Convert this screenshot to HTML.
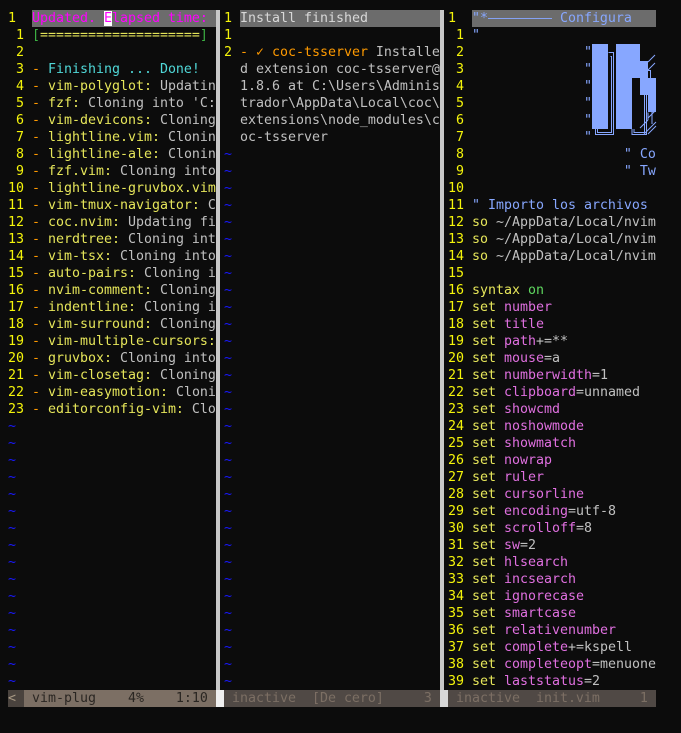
<!DOCTYPE html>
<html><head><meta charset="utf-8"><style>
*{margin:0;padding:0;box-sizing:border-box}
body{width:681px;height:733px;background:#0c0c0c;overflow:hidden;position:relative;font-family:"DejaVu Sans Mono","Liberation Mono",monospace;font-size:13.29px;color:#c0c0c0}
.p{position:absolute;top:10px;overflow:hidden;height:680px}
.r{height:17px;line-height:17px;white-space:pre;position:relative}
.n{color:#f5f50a}
.y{color:#e6e65a}
.o{color:#ff9a00}
.c{color:#50d8d8}
.m{color:#e070e0}
.b{color:#87a7ff}
.g{color:#5fd75f}
.t{color:#1818ff}
.hd{background:#6c6c6c}
.sep{position:absolute;top:10px;height:680px;width:4px;background:#c8c8c8}
.st{position:absolute;top:690px;height:17px;line-height:17px;white-space:pre}
</style></head><body>
<div class="sep" style="left:216px"></div>
<div class="sep" style="left:440px"></div>

<div class="p" style="left:8px;width:208px">
<div class="r"><span class="n">1  </span><span class="hd" style="color:#ff00ff;display:inline-block;width:184px">Updated. <span style="background:#fff">E</span>lapsed time:</span></div>
<div class="r"><span class="n"> 1 </span><span style="color:#3cb043">[</span><span class="y">====================</span><span style="color:#3cb043">]</span></div>
<div class="r"><span class="n"> 2 </span></div>
<div class="r"><span class="n"> 3 </span><span class="o">- </span><span class="c">Finishing ... Done!</span></div>
<div class="r"><span class="n"> 4 </span><span class="o">- </span><span class="y">vim-polyglot:</span> Updating</div>
<div class="r"><span class="n"> 5 </span><span class="o">- </span><span class="y">fzf:</span> Cloning into 'C:</div>
<div class="r"><span class="n"> 6 </span><span class="o">- </span><span class="y">vim-devicons:</span> Cloning</div>
<div class="r"><span class="n"> 7 </span><span class="o">- </span><span class="y">lightline.vim:</span> Cloning</div>
<div class="r"><span class="n"> 8 </span><span class="o">- </span><span class="y">lightline-ale:</span> Cloning</div>
<div class="r"><span class="n"> 9 </span><span class="o">- </span><span class="y">fzf.vim:</span> Cloning into</div>
<div class="r"><span class="n">10 </span><span class="o">- </span><span class="y">lightline-gruvbox.vim:</span></div>
<div class="r"><span class="n">11 </span><span class="o">- </span><span class="y">vim-tmux-navigator:</span> Cl</div>
<div class="r"><span class="n">12 </span><span class="o">- </span><span class="y">coc.nvim:</span> Updating fi</div>
<div class="r"><span class="n">13 </span><span class="o">- </span><span class="y">nerdtree:</span> Cloning into</div>
<div class="r"><span class="n">14 </span><span class="o">- </span><span class="y">vim-tsx:</span> Cloning into</div>
<div class="r"><span class="n">15 </span><span class="o">- </span><span class="y">auto-pairs:</span> Cloning in</div>
<div class="r"><span class="n">16 </span><span class="o">- </span><span class="y">nvim-comment:</span> Cloning</div>
<div class="r"><span class="n">17 </span><span class="o">- </span><span class="y">indentline:</span> Cloning in</div>
<div class="r"><span class="n">18 </span><span class="o">- </span><span class="y">vim-surround:</span> Cloning</div>
<div class="r"><span class="n">19 </span><span class="o">- </span><span class="y">vim-multiple-cursors:</span></div>
<div class="r"><span class="n">20 </span><span class="o">- </span><span class="y">gruvbox:</span> Cloning into</div>
<div class="r"><span class="n">21 </span><span class="o">- </span><span class="y">vim-closetag:</span> Cloning</div>
<div class="r"><span class="n">22 </span><span class="o">- </span><span class="y">vim-easymotion:</span> Clonin</div>
<div class="r"><span class="n">23 </span><span class="o">- </span><span class="y">editorconfig-vim:</span> Clo</div>
<div class="r t">~</div><div class="r t">~</div><div class="r t">~</div><div class="r t">~</div>
<div class="r t">~</div><div class="r t">~</div><div class="r t">~</div><div class="r t">~</div>
<div class="r t">~</div><div class="r t">~</div><div class="r t">~</div><div class="r t">~</div>
<div class="r t">~</div><div class="r t">~</div><div class="r t">~</div><div class="r t">~</div>
</div>

<div class="p" style="left:224px;width:216px">
<div class="r"><span class="n">1 </span><span class="hd" style="color:#d8d8d8;display:inline-block;width:200px">Install finished</span></div>
<div class="r"><span class="n">1 </span></div>
<div class="r"><span class="n">2 </span><span class="o">- ✓ coc-tsserver</span> Installe</div>
<div class="r">  d extension coc-tsserver@</div>
<div class="r">  1.8.6 at C:\Users\Adminis</div>
<div class="r">  trador\AppData\Local\coc\</div>
<div class="r">  extensions\node_modules\c</div>
<div class="r">  oc-tsserver</div>
<div class="r t">~</div><div class="r t">~</div><div class="r t">~</div><div class="r t">~</div>
<div class="r t">~</div><div class="r t">~</div><div class="r t">~</div><div class="r t">~</div>
<div class="r t">~</div><div class="r t">~</div><div class="r t">~</div><div class="r t">~</div>
<div class="r t">~</div><div class="r t">~</div><div class="r t">~</div><div class="r t">~</div>
<div class="r t">~</div><div class="r t">~</div><div class="r t">~</div><div class="r t">~</div>
<div class="r t">~</div><div class="r t">~</div><div class="r t">~</div><div class="r t">~</div>
<div class="r t">~</div><div class="r t">~</div><div class="r t">~</div><div class="r t">~</div>
<div class="r t">~</div><div class="r t">~</div><div class="r t">~</div><div class="r t">~</div>
</div>

<div class="p" style="left:448px;width:208px">
<div class="r"><span class="n">1  </span><span class="hd b" style="display:inline-block;width:184px">"*———————— Configura</span></div>
<div class="r"><span class="n"> 1 </span><span class="b">"</span></div>
<div class="r"><span class="n"> 2 </span><span class="b">              "</span></div>
<div class="r"><span class="n"> 3 </span><span class="b">              "</span></div>
<div class="r"><span class="n"> 4 </span><span class="b">              "</span></div>
<div class="r"><span class="n"> 5 </span><span class="b">              "</span></div>
<div class="r"><span class="n"> 6 </span><span class="b">              "</span></div>
<div class="r"><span class="n"> 7 </span><span class="b">              "</span></div>
<div class="r"><span class="n"> 8 </span><span class="b">                   " Co</span></div>
<div class="r"><span class="n"> 9 </span><span class="b">                   " Tw</span></div>
<div class="r"><span class="n">10 </span></div>
<div class="r"><span class="n">11 </span><span class="b">" Importo los archivos</span></div>
<div class="r"><span class="n">12 </span><span class="y">so</span> ~/AppData/Local/nvim</div>
<div class="r"><span class="n">13 </span><span class="y">so</span> ~/AppData/Local/nvim</div>
<div class="r"><span class="n">14 </span><span class="y">so</span> ~/AppData/Local/nvim</div>
<div class="r"><span class="n">15 </span></div>
<div class="r"><span class="n">16 </span><span class="y">syntax</span> <span class="g">on</span></div>
<div class="r"><span class="n">17 </span><span class="y">set</span> <span class="m">number</span></div>
<div class="r"><span class="n">18 </span><span class="y">set</span> <span class="m">title</span></div>
<div class="r"><span class="n">19 </span><span class="y">set</span> <span class="m">path</span>+=**</div>
<div class="r"><span class="n">20 </span><span class="y">set</span> <span class="m">mouse</span>=a</div>
<div class="r"><span class="n">21 </span><span class="y">set</span> <span class="m">numberwidth</span>=1</div>
<div class="r"><span class="n">22 </span><span class="y">set</span> <span class="m">clipboard</span>=unnamed</div>
<div class="r"><span class="n">23 </span><span class="y">set</span> <span class="m">showcmd</span></div>
<div class="r"><span class="n">24 </span><span class="y">set</span> <span class="m">noshowmode</span></div>
<div class="r"><span class="n">25 </span><span class="y">set</span> <span class="m">showmatch</span></div>
<div class="r"><span class="n">26 </span><span class="y">set</span> <span class="m">nowrap</span></div>
<div class="r"><span class="n">27 </span><span class="y">set</span> <span class="m">ruler</span></div>
<div class="r"><span class="n">28 </span><span class="y">set</span> <span class="m">cursorline</span></div>
<div class="r"><span class="n">29 </span><span class="y">set</span> <span class="m">encoding</span>=utf-8</div>
<div class="r"><span class="n">30 </span><span class="y">set</span> <span class="m">scrolloff</span>=8</div>
<div class="r"><span class="n">31 </span><span class="y">set</span> <span class="m">sw</span>=2</div>
<div class="r"><span class="n">32 </span><span class="y">set</span> <span class="m">hlsearch</span></div>
<div class="r"><span class="n">33 </span><span class="y">set</span> <span class="m">incsearch</span></div>
<div class="r"><span class="n">34 </span><span class="y">set</span> <span class="m">ignorecase</span></div>
<div class="r"><span class="n">35 </span><span class="y">set</span> <span class="m">smartcase</span></div>
<div class="r"><span class="n">36 </span><span class="y">set</span> <span class="m">relativenumber</span></div>
<div class="r"><span class="n">37 </span><span class="y">set</span> <span class="m">complete</span>+=kspell</div>
<div class="r"><span class="n">38 </span><span class="y">set</span> <span class="m">completeopt</span>=menuone</div>
<div class="r"><span class="n">39 </span><span class="y">set</span> <span class="m">laststatus</span>=2</div>
</div>

<svg style="position:absolute;left:0;top:0" width="681" height="733">
<g fill="#87a7ff">
<rect x="592" y="44" width="16" height="85"/>
<rect x="616" y="44" width="16" height="85"/>
<rect x="632" y="44" width="8" height="34"/>
<rect x="640" y="61" width="8" height="34"/>
<rect x="648" y="78" width="8" height="34"/>
</g>
<g fill="none" stroke="#87a7ff" stroke-width="1">
<path d="M608.5 52.5H613.5V134.5H595.5V129"/>
<path d="M610.5 56.5H611.5V132.5H597.5V129"/>
<path d="M632 129V134.5H646.5V95"/>
<path d="M634 129V132.5H644.5V95"/>
<path d="M640 70.5H650.5V78"/>
<path d="M648 87.5H656"/>
<path d="M648 112.5V120M652 112V124"/>
<path d="M648 62L655 55M648 70L655 63M648 118L655 111M640 128L648 120M644 134L656 122M648 134L656 126"/>
</g>
</svg>

<div class="st" style="left:8px;width:16px;background:#4a433e;color:#a89984">&lt; </div>
<div class="st" style="left:24px;width:192px;background:#7c6f64;color:#2a2622"> vim-plug    4%    1:10</div>
<div class="st" style="left:216px;width:8px;background:#f0f0f0"></div>
<div class="st" style="left:224px;width:216px;background:#504945;color:#7c6f64"> inactive  [De cero]     3</div>
<div class="st" style="left:440px;width:8px;background:#d8d8d8"></div>
<div class="st" style="left:448px;width:208px;background:#504945;color:#7c6f64"> inactive  init.vim     1</div>
</body></html>
